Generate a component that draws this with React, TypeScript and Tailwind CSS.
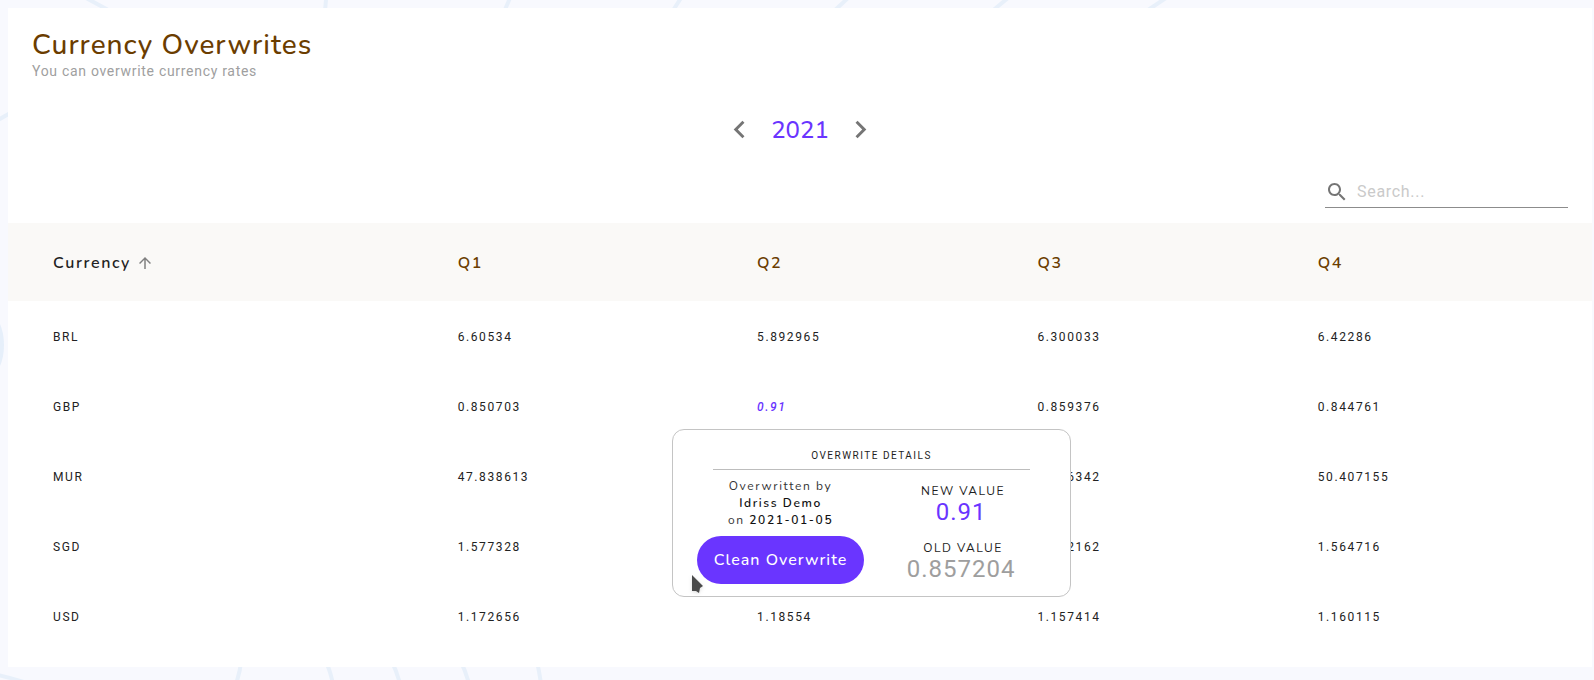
import React from "react";

type Row = { code: string; rates: string[]; overwritten?: number };

const quarters = ["Q1", "Q2", "Q3", "Q4"];

const rows: Row[] = [
  { code: "BRL", rates: ["6.60534", "5.892965", "6.300033", "6.42286"] },
  { code: "GBP", rates: ["0.850703", "0.91", "0.859376", "0.844761"], overwritten: 1 },
  { code: "MUR", rates: ["47.838613", "", "48.56342", "50.407155"] },
  { code: "SGD", rates: ["1.577328", "", "1.592162", "1.564716"] },
  { code: "USD", rates: ["1.172656", "1.18554", "1.157414", "1.160115"] },
];

function Icon({ d, className }: { d: string; className: string }) {
  return (
    <svg viewBox="0 0 24 24" fill="currentColor" aria-hidden="true" className={className}>
      <path d={d} />
    </svg>
  );
}

function Backdrop() {
  return (
    <svg
      aria-hidden="true"
      width="1594"
      height="680"
      className="pointer-events-none absolute top-0 left-0"
      fill="none"
      stroke="#e8f0fa"
      strokeWidth="4"
    >
      <path d="M86 -2 L112 12" />
      <path d="M326 -2 Q326 6 324 14" />
      <path d="M510 -2 L504 12" />
      <path d="M681 -2 L672 12" />
      <path d="M848 -2 L833 12" />
      <path d="M1008 -2 L991 12" />
      <path d="M1166 -2 L1145 12" />
      <path d="M-2 120 L12 112" />
      <path d="M-2 675 Q12 678 30 684" />
      <path d="M241 662 Q240 672 236 684" />
      <path d="M326 662 Q330 670 333 684" />
      <path d="M392 662 Q397 672 400 684" />
      <path d="M461 662 Q466 672 469 684" />
      <path d="M537 662 Q539 670 541 684" />
      <ellipse cx="-10" cy="345" rx="14" ry="30" fill="#e6effa" stroke="none" />
    </svg>
  );
}

function OverwriteDetails() {
  return (
    <div
      role="dialog"
      aria-label="Overwrite details"
      className="absolute top-[58px] -left-[85px] z-10 w-[399px] rounded-xl border border-[#c4c4c4] bg-white px-6 pt-4 pb-3 text-center text-[#1e1e1e]"
    >
      <h2 className="mx-4 border-b border-[#bdbdbd] pt-[3px] pb-[7px] font-['Roboto',sans-serif] text-[10px] leading-[13px] tracking-[1.5px]">
        OVERWRITE DETAILS
      </h2>
      <div className="flex justify-between pt-2">
        <div className="flex w-[167px] flex-col gap-[7px]">
          <p className="font-['Nunito','Lato',sans-serif] text-xs leading-[17px] tracking-[1.6px] text-[#333]">
            Overwritten by
            <br />
            <span className="font-semibold text-[#111]">Idriss Demo</span>
            <br />
            on <span className="font-semibold text-[#111]">2021-01-05</span>
          </p>
          <button
            type="button"
            className="h-12 w-full rounded-full bg-[#6a35ff] font-['Nunito','Lato',sans-serif] text-base font-medium tracking-[1px] whitespace-nowrap text-white"
          >
            Clean Overwrite
          </button>
        </div>
        <dl className="mr-3 flex w-[146px] flex-col gap-[15px] pt-1">
          <div>
            <dt className="pl-1 font-['Nunito','Lato',sans-serif] text-xs leading-[18px] tracking-[1.5px]">NEW VALUE</dt>
            <dd className="font-['Roboto',sans-serif] text-2xl leading-6 tracking-[1px] text-[#6a35ff]">0.91</dd>
          </div>
          <div>
            <dt className="pl-1 font-['Nunito','Lato',sans-serif] text-xs leading-[18px] tracking-[1.5px]">OLD VALUE</dt>
            <dd className="font-['Roboto',sans-serif] text-2xl leading-6 tracking-[1px] text-[#9e9e9e]">0.857204</dd>
          </div>
        </dl>
      </div>
      <svg
        aria-hidden="true"
        viewBox="0 0 18 24"
        className="absolute top-[143px] left-4 h-6 w-[18px] drop-shadow"
      >
        <path d="M3 2 L14 13 L11 15 L10 20 L7 18 L3 18 Z" fill="#4a4a4a" />
      </svg>
    </div>
  );
}

export default function App() {
  return (
    <div className="relative min-h-screen bg-[#f8f9fe] pt-2 pr-[2px] pb-[13px] pl-2 font-['Roboto',sans-serif]">
      <Backdrop />
      <main className="relative bg-white pb-4">
        <header className="px-6 pt-5">
          <h1 className="font-['Nunito','Lato',sans-serif] text-[28px] leading-[35px] font-medium tracking-[1px] text-[#6b3d00]">
            Currency Overwrites
          </h1>
          <p className="text-sm leading-4 tracking-[0.7px] text-[#a0a0a0]">You can overwrite currency rates</p>
        </header>

        <nav aria-label="Year" className="mt-[33px] flex h-[35px] items-center justify-center gap-[14px]">
          <button type="button" aria-label="Previous year" className="text-[#757575]">
            <Icon className="size-[35px]" d="M15.41 7.41L14 6l-6 6 6 6 1.41-1.41L10.83 12z" />
          </button>
          <span className="font-['Nunito','Lato',sans-serif] text-2xl leading-8 font-medium text-[#6a35ff]">2021</span>
          <button type="button" aria-label="Next year" className="text-[#757575]">
            <Icon className="size-[35px]" d="M10 6L8.59 7.41 13.17 12l-4.58 4.59L10 18l6-6z" />
          </button>
        </nav>

        <div className="mt-7 flex justify-end pr-6 pb-[15px]">
          <label className="flex h-[33px] w-[243px] items-center gap-2 border-b border-[#8c8c8c] pt-0.5">
            <Icon
              className="size-6 shrink-0 text-[#757575]"
              d="M15.5 14h-.79l-.28-.27C15.41 12.59 16 11.11 16 9.5 16 5.91 13.09 3 9.5 3S3 5.91 3 9.5 5.91 16 9.5 16c1.61 0 3.09-.59 4.23-1.57l.27.28v.79l5 4.99L20.49 19l-4.99-5zm-6 0C7.01 14 5 11.99 5 9.5S7.01 5 9.5 5 14 7.01 14 9.5 11.99 14 9.5 14z"
            />
            <input
              type="text"
              aria-label="Search"
              placeholder="Search..."
              className="w-full min-w-0 bg-transparent text-base tracking-[0.7px] outline-none placeholder:text-[#cacaca]"
            />
          </label>
        </div>

        <table className="w-full table-fixed border-collapse text-left">
          <colgroup>
            <col className="w-[27%]" />
            <col className="w-[18.9%]" />
            <col className="w-[17.7%]" />
            <col className="w-[17.7%]" />
            <col />
          </colgroup>
          <thead className="bg-[#faf9f7] font-['Nunito','Lato',sans-serif] text-base tracking-widest">
            <tr className="h-[78px]">
              <th scope="col" aria-sort="ascending" className="pt-0.5 pl-[45px] font-semibold text-[#222]">
                <button type="button" className="flex items-center gap-[5px]">
                  Currency
                  <Icon
                    className="size-[18px] text-[#808080]"
                    d="M4 12l1.41 1.41L11 7.83V20h2V7.83l5.58 5.59L20 12l-8-8-8 8z"
                  />
                </button>
              </th>
              {quarters.map((q) => (
                <th key={q} scope="col" className="pt-0.5 pl-[22px] font-semibold text-[#6b3d00]">
                  {q}
                </th>
              ))}
            </tr>
          </thead>
          <tbody className="text-xs tracking-[1.6px] text-[#222]">
            {rows.map((row) => (
              <tr key={row.code} className="h-[70px]">
                <td className="pt-0.5 pl-[45px]">{row.code}</td>
                {row.rates.map((rate, i) => (
                  <td key={quarters[i]} className="pt-0.5 pl-[22px]">
                    {row.overwritten === i ? (
                      <div className="relative flex h-[68px] items-center">
                        <span className="font-medium text-[#6a35ff] italic">{rate}</span>
                        <div className="absolute -top-0.5 left-0">
                          <OverwriteDetails />
                        </div>
                      </div>
                    ) : (
                      rate
                    )}
                  </td>
                ))}
              </tr>
            ))}
          </tbody>
        </table>
      </main>
    </div>
  );
}
